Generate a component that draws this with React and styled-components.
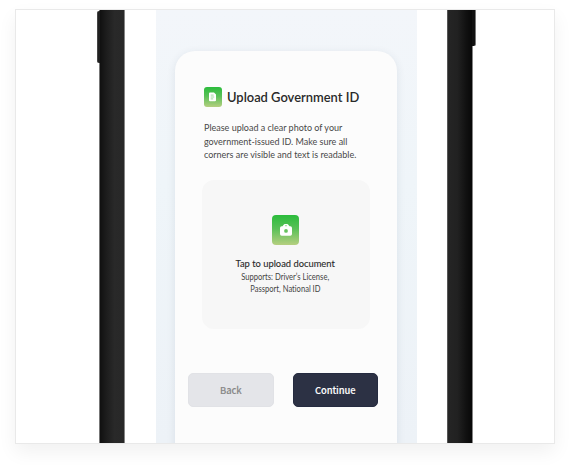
import React from "react";
import styled, { createGlobalStyle } from "styled-components";

const GlobalStyle = createGlobalStyle`
  * { box-sizing: border-box; }
  body { margin: 0; background: #fff; font-family: Lato, "Open Sans", sans-serif; font-variant-ligatures: none; overflow: hidden; }
`;

const Page = styled.main`
  width: 570px;
  height: 465px;
  padding: 9px 15px 0;
  overflow: hidden;
`;

const Frame = styled.section`
  display: flex;
  width: 540px;
  height: 435px;
  border: 1px solid #e9e9e9;
  background: #fff;
  box-shadow: 0 8px 18px rgba(0, 0, 0, 0.06);
`;

const Rail = styled.div`
  position: relative;
  flex: none;
  width: 26px;
  height: 433px;
  margin-left: ${(p) => (p.$side === "left" ? 83 : 30)}px;
  border-left: 1px solid ${(p) => (p.$side === "left" ? "#777" : "#555")};
  border-right: 1px solid #858585;
  background: ${(p) =>
    p.$side === "left"
      ? "linear-gradient(90deg, #101010, #1c1c1c 25%, #292929 60%, #282828)"
      : "linear-gradient(90deg, #252525, #212121 40%, #111 75%, #080808)"};
`;

const SideButton = styled.span`
  position: absolute;
  top: ${(p) => (p.$side === "left" ? 1 : 0)}px;
  ${(p) => (p.$side === "left" ? "left: -3px;" : "right: -4px;")}
  width: ${(p) => (p.$side === "left" ? 3 : 4)}px;
  height: ${(p) => (p.$side === "left" ? 52 : 36)}px;
  border-radius: ${(p) => (p.$side === "left" ? "2px 0 0 2px" : "0 0 2px 0")};
  border-${(p) => p.$side}: 1px solid ${(p) => (p.$side === "left" ? "#444" : "#777")};
  background: ${(p) => (p.$side === "left" ? "#202020" : "#101010")};
`;

const Screen = styled.div`
  flex: none;
  width: 261px;
  height: 433px;
  margin-left: 31px;
  padding: 41px 20px 0 19px;
  overflow: hidden;
  background: linear-gradient(#f3f6fa, #eff5f9 40%, #edf2f7);
`;

const Card = styled.div`
  width: 222px;
  height: 430px;
  padding: 36px 13px 0;
  border-radius: 20px;
  background: #fcfcfc;
  box-shadow: 0 2px 8px rgba(44, 60, 90, 0.1);
`;

const Heading = styled.header`
  display: flex;
  align-items: center;
  gap: 5px;
  height: 20px;
  margin-left: 15.5px;
`;

const IconTile = styled.span`
  display: flex;
  flex: none;
  align-items: center;
  justify-content: center;
  width: ${(p) => p.$width}px;
  height: ${(p) => p.$height}px;
  border-radius: ${(p) => p.$radius}px;
  background: linear-gradient(#2bbc3c, #58c057 45%, #b5cf80);
`;

const Title = styled.h1`
  margin: 0;
  color: #292929;
  font-size: 14px;
  font-weight: 600;
  line-height: 20px;
`;

const Description = styled.p`
  margin: 14px 0 0 15.5px;
  color: #484848;
  font-size: 10px;
  line-height: 13.5px;
`;

const Line = styled.span`
  display: block;
  width: max-content;
  transform: scaleX(${(p) => p.$condense});
  transform-origin: ${(p) => (p.$centered ? "center" : "left")};
  white-space: nowrap;
`;

const UploadArea = styled.div`
  display: flex;
  flex-direction: column;
  align-items: center;
  width: 168px;
  height: 149px;
  margin: 18.5px 0 0 13.6px;
  padding-top: 34.5px;
  border-radius: 12px;
  background: #f7f7f7;
`;

const UploadTitle = styled.div`
  margin-top: 11.5px;
  color: #292929;
  font-size: 10px;
  font-weight: 400;
  line-height: 14px;
  -webkit-text-stroke: 0.12px currentColor;
`;

const Support = styled.div`
  display: flex;
  flex-direction: column;
  align-items: center;
  margin-top: 1px;
  color: #444;
  font-size: 8.5px;
  line-height: 12px;
`;

const Actions = styled.div`
  display: flex;
  gap: 19px;
  margin-top: 43.5px;
`;

const Button = styled.button`
  width: 85.5px;
  height: 34.5px;
  padding: 0;
  border: 1px solid ${(p) => (p.$primary ? "#252b40" : "#e1e2e6")};
  border-radius: 5px;
  color: ${(p) => (p.$primary ? "#fff" : "#888")};
  background: ${(p) => (p.$primary ? "#2c3144" : "#e4e5e9")};
  font: 500 9.4px/14px "Noto Sans CJK SC", "Noto Sans", sans-serif;
  letter-spacing: -0.1px;
  -webkit-text-stroke: 0.12px currentColor;
`;

function DocumentIcon() {
  return (
    <svg width="9" height="10" viewBox="0 0 9 10">
      <path d="M2 .5h4L8 2.4V8.2a1 1 0 0 1-1 1H2a1 1 0 0 1-1-1V1.5a1 1 0 0 1 1-1Z" fill="#fff" />
      <path d="M2.7 3.1h3M2.7 5h3.5M2.7 6.9h2.5" stroke="#83cf83" strokeWidth=".75" />
    </svg>
  );
}

function CameraIcon() {
  return (
    <svg width="14" height="14" viewBox="0 0 14 14">
      <path d="M3.5 3.3 4.9 1.4Q5.3 1 5.8 1h2.4q.5 0 .9.4l1.4 1.9h.8Q13 3.3 13 5v6q0 1.8-1.7 1.8H2.7Q1 12.8 1 11V5q0-1.7 1.7-1.7Z" fill="#fff" />
      <circle cx="7" cy="7.9" r="1.9" fill="#65c35d" />
      <circle cx="7" cy="2.7" r=".65" fill="#65c35d" />
    </svg>
  );
}

export default function App() {
  return (
    <Page>
      <GlobalStyle />
      <Frame>
        <Rail $side="left"><SideButton $side="left" /></Rail>
        <Screen>
          <Card>
            <Heading>
              <IconTile $width={18} $height={20} $radius={3}><DocumentIcon /></IconTile>
              <Title><Line $condense={0.922}>Upload Government ID</Line></Title>
            </Heading>
            <Description>
              <Line $condense={0.9}>Please upload a clear photo of your</Line>
              <Line $condense={0.9}>government-issued ID. Make sure all</Line>
              <Line $condense={0.9}>corners are visible and text is readable.</Line>
            </Description>
            <UploadArea>
              <IconTile $width={27} $height={30} $radius={4}><CameraIcon /></IconTile>
              <UploadTitle><Line $centered $condense={0.935}>Tap to upload document</Line></UploadTitle>
              <Support>
                <Line $centered $condense={0.895}>Supports: Driver’s License,</Line>
                <Line $centered $condense={0.89}>Passport, National ID</Line>
              </Support>
            </UploadArea>
            <Actions>
              <Button>Back</Button>
              <Button $primary>Continue</Button>
            </Actions>
          </Card>
        </Screen>
        <Rail $side="right"><SideButton $side="right" /></Rail>
      </Frame>
    </Page>
  );
}
